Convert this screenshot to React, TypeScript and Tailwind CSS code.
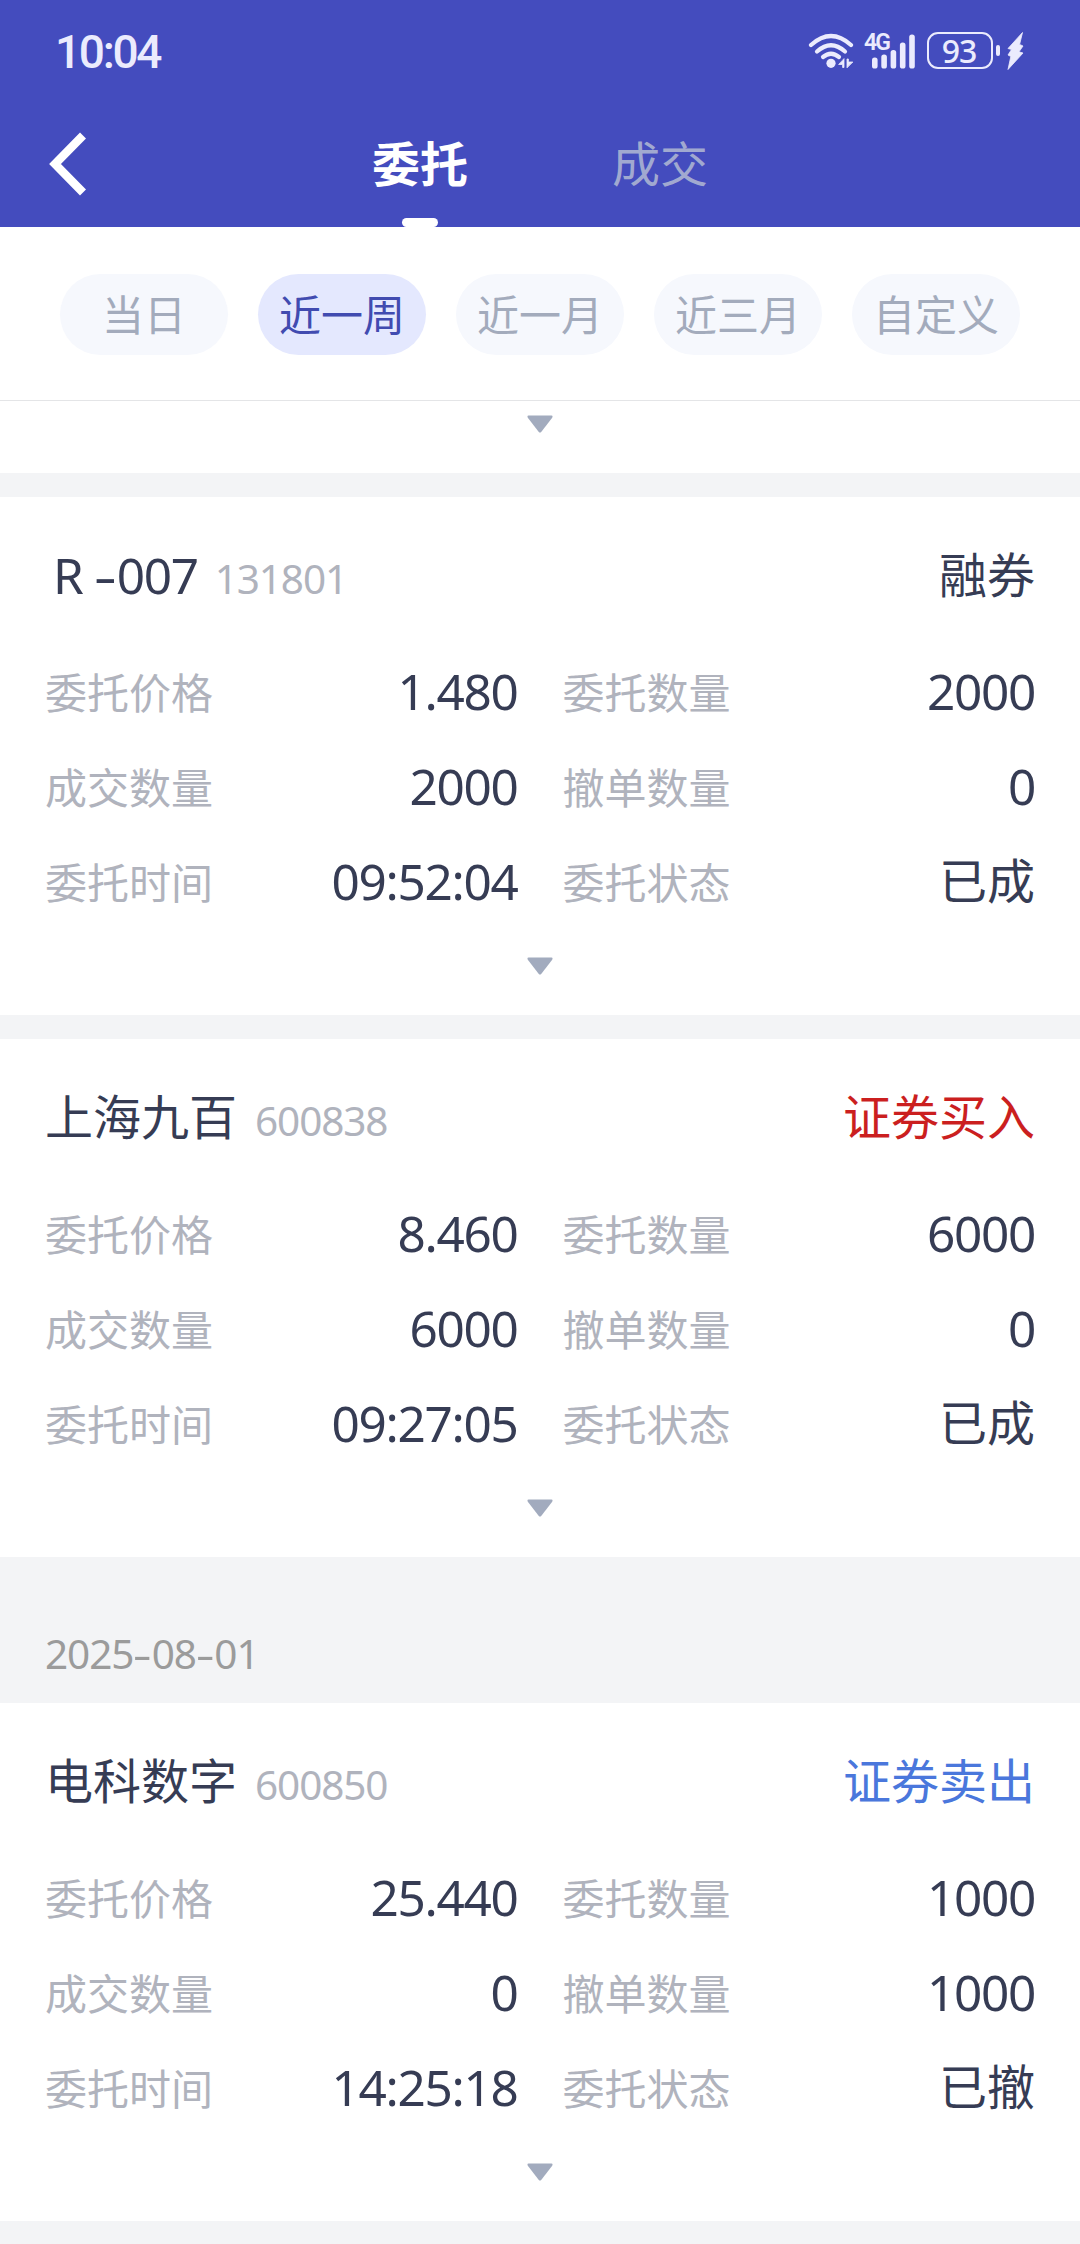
import { Fragment } from 'react';

type Order = {
  name: string;
  nameClass?: string;
  code: string;
  side: string;
  sideColor: string;
  fields: [string, string][];
};

const orders: Order[] = [
  {
    name: 'R -007',
    nameClass: 'pl-[8px] -mr-px',
    code: '131801',
    side: '融券',
    sideColor: 'text-[#363c54]',
    fields: [
      ['委托价格', '1.480'],
      ['委托数量', '2000'],
      ['成交数量', '2000'],
      ['撤单数量', '0'],
      ['委托时间', '09:52:04'],
      ['委托状态', '已成'],
    ],
  },
  {
    name: '上海九百',
    code: '600838',
    side: '证券买入',
    sideColor: 'text-[#cb1f1f]',
    fields: [
      ['委托价格', '8.460'],
      ['委托数量', '6000'],
      ['成交数量', '6000'],
      ['撤单数量', '0'],
      ['委托时间', '09:27:05'],
      ['委托状态', '已成'],
    ],
  },
  {
    name: '电科数字',
    code: '600850',
    side: '证券卖出',
    sideColor: 'text-[#4a77dc]',
    fields: [
      ['委托价格', '25.440'],
      ['委托数量', '1000'],
      ['成交数量', '0'],
      ['撤单数量', '1000'],
      ['委托时间', '14:25:18'],
      ['委托状态', '已撤'],
    ],
  },
];

const ranges = ['当日', '近一周', '近一月', '近三月', '自定义'];

const isNumeric = (s: string) => /^[R\d\s.:-]+$/.test(s);

/* Hyphens are drawn a little wider than the font's own. */
function Dashed({ text }: { text: string }) {
  return (
    <>
      {text.split('-').map((part, i) => (
        <Fragment key={i}>
          {i > 0 && (
            <span className="inline-block w-[0.456em] scale-x-[1.45] text-center tracking-normal">-</span>
          )}
          {part}
        </Fragment>
      ))}
    </>
  );
}

function Value({ text, className = '' }: { text: string; className?: string }) {
  return isNumeric(text) ? (
    <span className={`whitespace-pre text-[49.5px] tracking-[-1.3px] leading-[95px] ${className}`}>
      <Dashed text={text} />
    </span>
  ) : (
    <span className={`-translate-y-px text-[48px] leading-[95px] ${className}`}>{text}</span>
  );
}

function Caret() {
  return (
    <svg className="block h-[18px] w-[26px]" viewBox="0 0 26 18">
      <path d="M1.5 0.5H24.5Q26.3 0.8 25 3L14.2 17Q13 18.2 11.8 17L1 3Q-0.3 0.8 1.5 0.5Z" fill="#a2abbe" />
    </svg>
  );
}

function OrderCard({ order }: { order: Order }) {
  return (
    <section className="h-[518px] bg-white px-[45px] pt-[31px]">
      <div className="flex h-[95px] items-baseline">
        <Value text={order.name} className={`text-[#363c54] ${order.nameClass ?? ''}`} />
        <span className="ml-[18px] text-[40.5px] leading-[95px] tracking-[-1.1px] text-[#b0b3bd]">{order.code}</span>
        <Value text={order.side} className={`ml-auto ${order.sideColor}`} />
      </div>
      <div className="mt-[21px] grid grid-cols-2 gap-x-[45px]">
        {order.fields.map(([label, value]) => (
          <div key={label} className="flex h-[95px] items-baseline justify-between">
            <span className="-translate-y-px text-[42px] leading-[95px] text-[#b0b3bd]">{label}</span>
            <Value text={value} className="text-[#363c54]" />
          </div>
        ))}
      </div>
      <div className="mt-[28px] flex justify-center">
        <Caret />
      </div>
    </section>
  );
}

function StatusBar() {
  return (
    <div className="flex h-[101px] items-center justify-between pl-[55px] pr-[56px] text-[#ebebfd]">
      <span className="pt-[2px] font-[Roboto] text-[46px] font-medium leading-none tracking-[-2.3px]">10:04</span>
      <div className="flex items-center">
        <svg className="h-[36px] w-[46px]" viewBox="0 0 46 36" fill="none" stroke="#ebebfd" strokeWidth="4.2" strokeLinecap="round">
          <path d="M3 12Q23 -6 43 12" />
          <path d="M9 18.5Q23 6 37 18.5" />
          <path d="M15 24Q23 17.500 31 24" />
          <circle cx="23" cy="30.300" r="4.600" fill="#ebebfd" stroke="none" />
          <path d="M36 26V34.500H34.600V31.500H31ZM39 34.500V26H40.400V29H44.500Z" fill="#ebebfd" stroke="#ebebfd" strokeWidth="0.8" />
        </svg>
        <div className="relative ml-[11px] h-[36px] w-[50px]">
          <span className="absolute -left-px top-0 font-[Roboto] text-[23px] font-semibold leading-[20px] tracking-[-1.8px]">4G</span>
          <svg className="h-[36px] w-[50px]" viewBox="0 0 50 36" fill="#ebebfd">
            <rect x="7" y="24.500" width="5.600" height="11" rx="2.600" />
            <rect x="16.300" y="21.500" width="5.600" height="14" rx="2.600" />
            <rect x="25.600" y="17" width="5.600" height="18.500" rx="2.600" />
            <rect x="34.900" y="9.500" width="5.600" height="26" rx="2.600" />
            <rect x="44.200" y="1.500" width="5.600" height="34" rx="2.600" />
          </svg>
        </div>
        <div className="ml-[12px] flex h-[37px] w-[66px] items-center justify-center rounded-[11px] border-[2.5px] border-[#ebebfd] pr-[2px] text-[32px] font-medium leading-none tracking-[-1px]">
          93
        </div>
        <div className="ml-[3px] h-[11px] w-[4px] rounded-[2px] bg-[#ebebfd]" />
        <svg className="ml-[7px] h-[38px] w-[17px]" viewBox="0 0 17 38" fill="#ebebfd">
          <path d="M15.500 0.500L1 16.500L4.500 17.500L1 23L3.800 24.500L1 37.500L16 21L12 19.800L16 14L12.600 12.400Z" stroke="#ebebfd" strokeWidth="0.8" strokeLinejoin="round" />
        </svg>
      </div>
    </div>
  );
}

export default function App() {
  return (
    <div className="flex h-[2244px] w-[1080px] flex-col overflow-hidden bg-[#f3f4f6] font-['Noto_Sans','Noto_Sans_CJK_SC',sans-serif]">
      <header className="h-[227px] bg-[#444cbe]">
        <StatusBar />
        <div className="flex h-[126px]">
          <button className="flex w-[300px] items-center pl-[49px]">
            <svg className="h-[64px] w-[38px]" viewBox="0 0 38 64">
              <path d="M34 3.500L6 32L34 60.500" fill="none" stroke="#fff" strokeWidth="8.400" />
            </svg>
          </button>
          <div className="flex w-[240px] flex-col items-center justify-between">
            <span className="pt-[7px] text-[48px] font-bold leading-[110px] text-white translate-y-px">委托</span>
            <span className="h-[9px] w-[36px] rounded-[4.5px] bg-white" />
          </div>
          <div className="w-[240px] pt-[4px] text-center text-[48px] leading-[117px] text-[#a1a9d0]">成交</div>
        </div>
      </header>

      <nav className="flex h-[174px] justify-center gap-[30px] border-b border-[#e4e5e7] bg-white pt-[47px]">
        {ranges.map((r) => (
          <button
            key={r}
            className={`h-[81px] w-[168px] rounded-full text-[42px] leading-[77px] ${
              r === '近一周' ? 'bg-[#e4e8fe] text-[#414bb0]' : 'bg-[#f6f8fd] text-[#a3abbc]'
            }`}
          >
            {r}
          </button>
        ))}
      </nav>

      <div className="flex h-[72px] justify-center bg-white pt-[14px]">
        <Caret />
      </div>

      <main className="flex flex-col">
        <div className="flex flex-col gap-[24px] pt-[24px]">
          <OrderCard order={orders[0]} />
          <OrderCard order={orders[1]} />
        </div>
        <h2 className="h-[146px] pl-[45px] pt-[69px] text-[40.5px] leading-[56px] tracking-[-1.1px] text-[#9b9b9b]">
          <Dashed text="2025-08-01" />
        </h2>
        <OrderCard order={orders[2]} />
      </main>
    </div>
  );
}
